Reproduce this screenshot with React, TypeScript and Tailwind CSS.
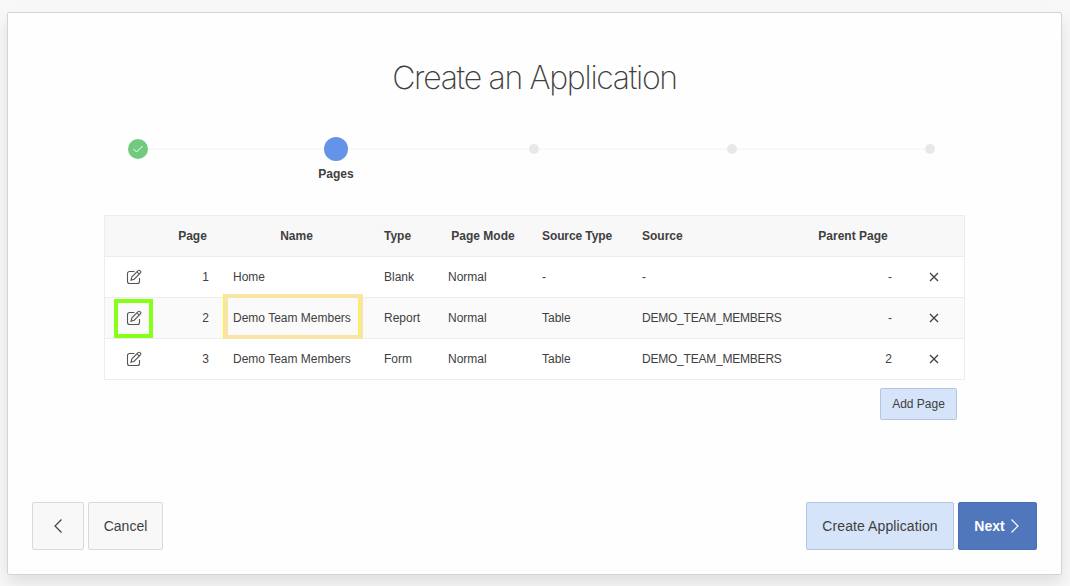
import React from "react";

type Row = { page: string; name: string; type: string; source: string; sourceType: string; parent: string; marked?: boolean };

const rows: Row[] = [
  { page: "1", name: "Home", type: "Blank", sourceType: "-", source: "-", parent: "-" },
  { page: "2", name: "Demo Team Members", type: "Report", sourceType: "Table", source: "DEMO_TEAM_MEMBERS", parent: "-", marked: true },
  { page: "3", name: "Demo Team Members", type: "Form", sourceType: "Table", source: "DEMO_TEAM_MEMBERS", parent: "2" },
];

const columns =
  "grid grid-cols-[59px_57px_151px_64px_94px_100px_172px_102px_60px] items-center";

function EditIcon() {
  return (
    <svg width="16" height="16" viewBox="0 0 16 16" fill="none" stroke="#555555" strokeWidth="1.1">
      <path d="M8.500 2.500H3.500a2 2 0 0 0-2 2v8a2 2 0 0 0 2 2h8a2 2 0 0 0 2-2V9" />
      <path d="M5 11.200l.9-3.400 6.200-6.200a1.300 1.300 0 0 1 1.900 0l.4.4a1.300 1.300 0 0 1 0 1.900L8.200 10.200z" />
      <path d="M11 2.800l2.300 2.300" />
    </svg>
  );
}

function DeleteIcon() {
  return (
    <svg width="10" height="10" viewBox="0 0 10 10" fill="none" stroke="#404040" strokeWidth="1.3">
      <path d="M1 1l8 8M9 1l-8 8" />
    </svg>
  );
}

function PageRow({ row }: { row: Row }) {
  return (
    <div className={`${columns} relative h-[41px] border-b border-[#ededed] ${row.marked ? "bg-[#fafafa]" : "bg-white"}`}>
      <button className="flex justify-center pr-px"><EditIcon /></button>
      <span className="px-3 text-right">{row.page}</span>
      <span className="px-3">{row.name}</span>
      <span className="px-3">{row.type}</span>
      <span className="px-3">Normal</span>
      <span className="px-3">{row.sourceType}</span>
      <span className="px-3 tracking-[-0.22px]">{row.source}</span>
      <span className="px-3 text-right">{row.parent}</span>
      <button className="flex justify-center"><DeleteIcon /></button>
      {row.marked && (
        <>
          <div className="absolute left-[9px] top-[1px] h-[39px] w-[39px] border-4 border-[#88ff17]" />
          <div className="absolute left-[118px] top-[-4px] h-[45px] w-[140px] border-[5px] border-y-4 border-[#f8e5a6]">
            <div className="absolute -left-[5px] -top-1 h-[45px] w-px bg-[#fdf733]" />
            <div className="absolute -right-px top-0 h-full w-px bg-[#fffb20]" />
          </div>
        </>
      )}
    </div>
  );
}

function Dot() {
  return <div className="size-[10px] rounded-full bg-[#e8e8e8]" />;
}

export default function App() {
  return (
    <div className="h-[586px] overflow-hidden bg-[#f8f8f8] pl-[7px] pt-[12px] font-['Liberation_Sans',Arial,sans-serif] text-[12px] leading-4 text-[#404040]">
      <main className="flex h-[563px] w-[1055px] flex-col rounded-[2px] border border-[#d4d4d4] bg-[#fefefe] px-6 pb-6 shadow-[0_8px_16px_rgba(0,0,0,0.1)]">
        <h1 className="mt-[44px] text-center font-[Inter] text-[32px] font-extralight leading-[42px] tracking-[-1.3px]">Create an Application</h1>

        <div className="ml-[96px] mt-[38px] flex h-6 w-[807px] items-center">
          <div className="flex size-5 items-center justify-center rounded-full bg-[#70cb7f]">
            <svg width="12" height="12" viewBox="0 0 12 12" fill="none" stroke="white" strokeWidth="1">
              <path d="M1.500 6l3 3 6-6" />
            </svg>
          </div>
          <div className="h-[2px] w-[176px] bg-[#f8f8f8]" />
          <div className="size-6 rounded-full bg-[#6494e8]" />
          <div className="h-[2px] w-[181px] bg-[#f8f8f8]" />
          <Dot />
          <div className="h-[2px] w-[188px] bg-[#f8f8f8]" />
          <Dot />
          <div className="h-[2px] w-[188px] bg-[#f8f8f8]" />
          <Dot />
        </div>
        <div className="ml-[264px] mt-[5px] w-20 text-center font-bold">Pages</div>

        <section className="ml-[72px] mt-[33px] w-[861px] border border-b-0 border-[#ededed]">
          <div className={`${columns} h-[41px] border-b border-[#ededed] bg-[#f8f8f8] font-bold`}>
            <span />
            <span className="text-center">Page</span>
            <span className="text-center">Name</span>
            <span className="px-3">Type</span>
            <span className="text-center">Page Mode</span>
            <span className="px-3 tracking-[-0.1px]">Source Type</span>
            <span className="px-3">Source</span>
            <span className="text-center">Parent Page</span>
            <span />
          </div>
          {rows.map((row) => <PageRow key={row.page} row={row} />)}
        </section>

        <div className="mt-2 flex pl-[848px]">
          <button className="h-8 w-[77px] rounded-[2px] border border-[#b4c6df] bg-[#d6e4fa]">Add Page</button>
        </div>

        <footer className="mt-auto flex gap-1 text-[14px]">
          <button className="flex h-12 w-[52px] items-center justify-center rounded-[2px] border border-[#dadada] bg-[#f8f8f8]">
            <svg width="10" height="16" viewBox="0 0 10 16" fill="none" stroke="#404040" strokeWidth="1.200">
              <path d="M8.500 1.500L2 8l6.500 6.500" />
            </svg>
          </button>
          <button className="h-12 w-[75px] rounded-[2px] border border-[#dadada] bg-[#f8f8f8]">Cancel</button>
          <button className="ml-auto h-12 w-[148px] rounded-[2px] border border-[#b4c6df] bg-[#d6e4fa] tracking-[0.1px]">Create Application</button>
          <button className="flex h-12 w-[79px] items-center justify-center gap-[5px] rounded-[2px] border border-[#4a71b5] bg-[#5076bb] pr-px font-bold text-white">
            Next
            <svg width="10" height="16" viewBox="0 0 10 16" fill="none" stroke="white" strokeWidth="1.200">
              <path d="M1.500 1.500L8 8l-6.500 6.500" />
            </svg>
          </button>
        </footer>
      </main>
    </div>
  );
}
